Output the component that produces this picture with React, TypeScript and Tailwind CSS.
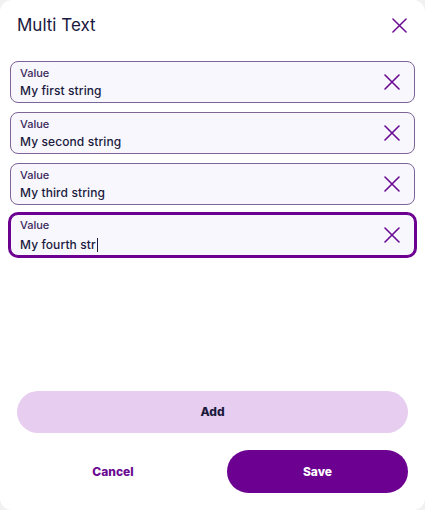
import React from "react";

function XIcon({ size = 16 }: { size?: number }) {
  return (
    <svg width={size} height={size} viewBox="0 0 16 16" fill="none" stroke="#6b0a93" strokeWidth="1.6" strokeLinecap="round">
      <path d="M1 1 L15 15 M15 1 L1 15" />
    </svg>
  );
}

function Field({ value, focused, cursor }: { value: string; focused?: boolean; cursor?: boolean }) {
  return (
    <div
      className={
        focused
          ? "flex h-[42px] items-center rounded-[8px] border border-[#6b0091] bg-[#f7f7fd] pl-[9px] pr-[14px] ring-2 ring-[#6b0091]"
          : "flex h-[42px] items-center rounded-[8px] border border-[#7d6597] bg-[#f7f7fd] pl-[9px] pr-[14px]"
      }
    >
      <div className="flex flex-1 flex-col">
        <span className="text-[11px] leading-[13px] font-medium text-[#3b2a5c]">Value</span>
        <span className="mt-[3px] text-[12px] leading-[15px] font-medium tracking-[0.1px] text-[#1c1a3d]">
          {value}
          {cursor && <span className="ml-[1px] inline-block h-[14px] w-px translate-y-[3px] bg-[#1c1a3d]" />}
        </span>
      </div>
      <XIcon />
    </div>
  );
}

export default function App() {
  return (
    <div className="h-[510px] w-[425px] bg-[#f1f1f1]" style={{ fontFamily: "Inter, 'Noto Sans', sans-serif" }}>
      <div className="flex h-full w-full flex-col rounded-[12px] bg-white">
        <div className="flex items-center justify-between pl-[17px] pr-[18px] pt-[11px]">
          <span className="text-[17px] leading-[28px] text-[#1a1840]">Multi Text</span>
          <XIcon size={15} />
        </div>
        <div className="mt-[22px] flex flex-col gap-[9px] px-[10px]">
          <Field value="My first string" />
          <Field value="My second string" />
          <Field value="My third string" />
          <Field value="My fourth str" focused cursor />
        </div>
        <div className="flex-1" />
        <div className="flex flex-col px-[17px] pb-[17px]">
          <button className="h-[42px] rounded-full bg-[#e7cdf0] text-[12px] font-extrabold text-[#1c1a3d]">Add</button>
          <div className="mt-[17px] flex items-center gap-[18px]">
            <button className="h-[43px] flex-1 text-[12px] font-extrabold text-[#6b0a93]">Cancel</button>
            <button className="h-[43px] w-[181px] rounded-full bg-[#6b0091] text-[12px] font-extrabold text-white">Save</button>
          </div>
        </div>
      </div>
    </div>
  );
}
